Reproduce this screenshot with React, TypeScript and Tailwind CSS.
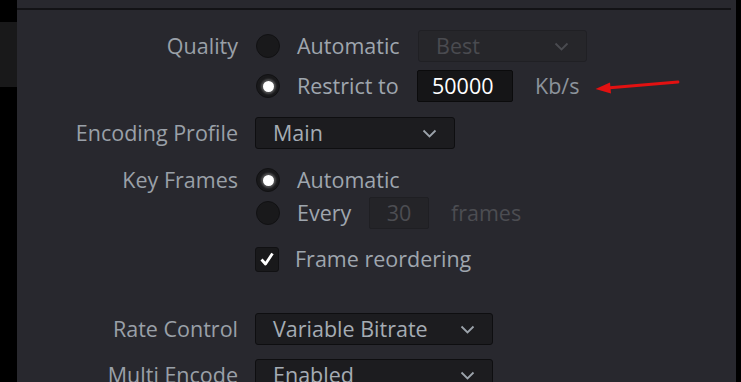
import type { ReactNode } from 'react'

const font = { fontFamily: '"Open Sans", "Noto Sans", sans-serif' }

function Chevron({ dim }: { dim?: boolean }) {
  return (
    <svg width="15" height="9" viewBox="0 0 15 9" className={dim ? 'text-[#4a4b50]' : 'text-[#9ca3ab]'}>
      <path d="M1.5 1.5 L7.5 7.5 L13.5 1.5" fill="none" stroke="currentColor" strokeWidth="1.8" />
    </svg>
  )
}

function Select({ value, width, dim }: { value: string; width: string; dim?: boolean }) {
  return (
    <div
      className={`flex h-[32px] items-center justify-between rounded-[3px] border pl-[17px] pr-[17px] ${width} ${
        dim ? 'border-[#202024] bg-[#26262a] text-[#4a4b50]' : 'border-[#0e0e10] bg-[#1c1c1f] text-[#a5acb4]'
      }`}
    >
      <span>{value}</span>
      <Chevron dim={dim} />
    </div>
  )
}

function Radio({ on }: { on?: boolean }) {
  return (
    <div className="flex h-6 w-6 items-center justify-center rounded-full border border-[#111113] bg-[#19191b]">
      {on && <div className="h-[11px] w-[11px] rounded-full bg-white shadow-[0_0_2px_2px_rgba(150,150,150,0.45)]" />}
    </div>
  )
}

function Row({ label, children, className = '' }: { label?: string; children: ReactNode; className?: string }) {
  return (
    <div className={`flex ${className}`}>
      <div className="flex h-[32px] w-[221px] shrink-0 items-center justify-end text-[#9aa0a8]">{label}</div>
      <div className="ml-[17px] flex flex-col gap-[8px]">{children}</div>
    </div>
  )
}

export default function App() {
  return (
    <div className="flex h-[382px] w-[741px] overflow-hidden bg-black text-[21.5px] leading-[1.3]" style={font}>
      <div className="flex w-[17px] shrink-0 flex-col">
        <div className="h-[22px]" />
        <div className="h-[65px] bg-[#19191a]" />
      </div>
      <div className="flex-1 bg-[#28282e]">
        <div className="mr-[5px] mt-[8px] h-[2px] bg-[#131316]" />
        <div className="flex flex-col pt-[20px]">
          <Row label="Quality">
            <div className="flex h-[32px] items-center">
              <div className="ml-[1px]"><Radio /></div>
              <span className="ml-[17px] w-[121px] text-[#9fa6ae]">Automatic</span>
              <Select value="Best" width="w-[169px]" dim />
            </div>
            <div className="flex h-[32px] items-center">
              <div className="ml-[1px]"><Radio on /></div>
              <span className="ml-[17px] w-[120px] text-[#9fa6ae]">Restrict to</span>
              <div className="flex h-[32px] w-[96px] items-center rounded-[2px] border border-[#0b0b0c] bg-[#151517] pl-[14px] text-white">
                50000
              </div>
              <span className="ml-[22px] text-[#8c939b]">Kb/s</span>
              <svg width="86" height="16" viewBox="0 0 86 16" className="ml-[16px] mt-[2px]">
                <path d="M12 9 L83 3" stroke="#e21111" strokeWidth="2.8" strokeLinecap="round" />
                <path d="M0.5 10 L15 3.5 L16 14.5 Z" fill="#e21111" />
              </svg>
            </div>
          </Row>
          <Row label="Encoding Profile" className="mt-[15px]">
            <Select value="Main" width="w-[200px]" />
          </Row>
          <Row label="Key Frames" className="mt-[15px]">
            <div className="flex flex-col gap-[1px]">
              <div className="flex h-[32px] items-center">
                <div className="ml-[1px]"><Radio on /></div>
                <span className="ml-[17px] text-[#9fa6ae]">Automatic</span>
              </div>
              <div className="flex h-[32px] items-center">
                <div className="ml-[1px]"><Radio /></div>
                <span className="ml-[17px] w-[72px] text-[#9fa6ae]">Every</span>
                <div className="flex h-[32px] w-[60px] items-center justify-center rounded-[2px] border border-[#1f1f23] bg-[#242428] text-[#4c4d52]">
                  30
                </div>
                <span className="ml-[22px] text-[#4c4d52]">frames</span>
              </div>
            </div>
          </Row>
          <Row className="mt-[14px]">
            <div className="flex h-[32px] items-center">
              <div className="flex h-[25px] w-[24px] items-center justify-center rounded-[3px] border border-[#111113] bg-[#19191b]">
                <svg width="16" height="16" viewBox="0 0 16 16">
                  <path d="M2.5 8.5 L6.5 13 L13.5 2.5" fill="none" stroke="white" strokeWidth="2.8" strokeLinejoin="round" />
                </svg>
              </div>
              <span className="ml-[16px] text-[#9fa6ae]">Frame reordering</span>
            </div>
          </Row>
          <Row label="Rate Control" className="mt-[38px]">
            <Select value="Variable Bitrate" width="w-[238px]" />
          </Row>
          <Row label="Multi Encode" className="mt-[14px]">
            <Select value="Enabled" width="w-[238px]" />
          </Row>
        </div>
      </div>
      <div className="w-[5px] shrink-0 bg-black" />
    </div>
  )
}
